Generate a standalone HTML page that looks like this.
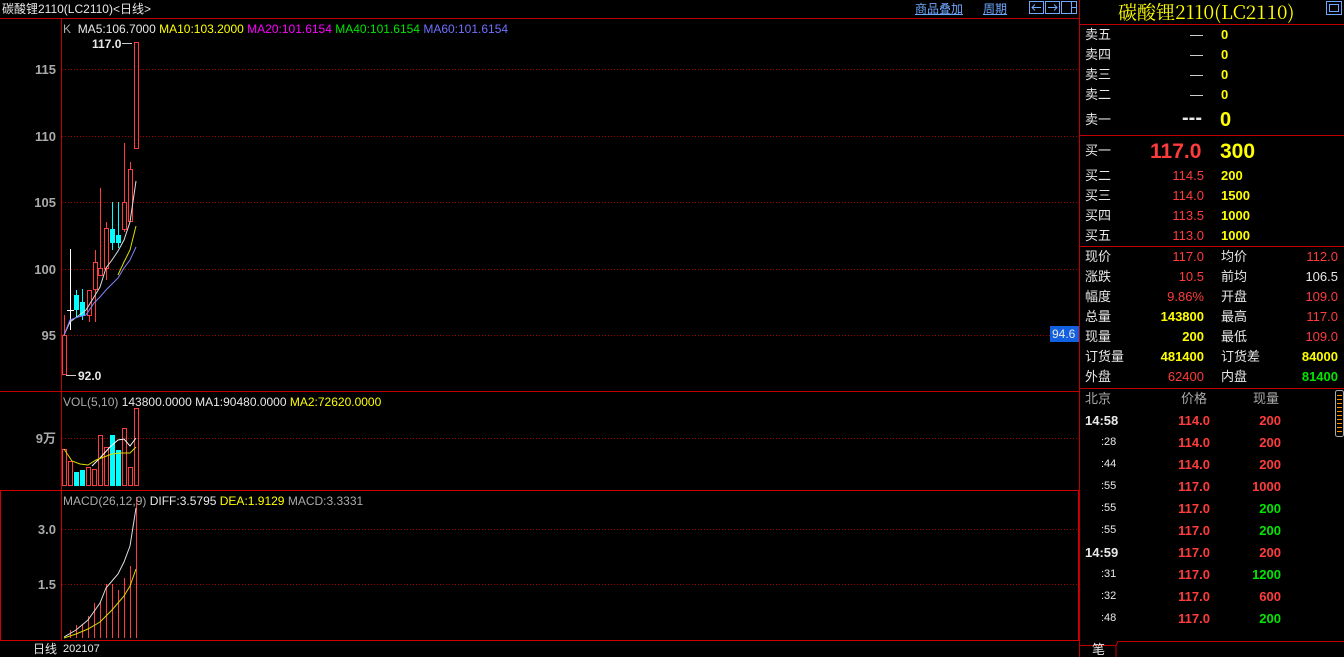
<!DOCTYPE html>
<html><head><meta charset="utf-8"><style>
body{margin:0;width:1344px;height:657px;background:#000;overflow:hidden;position:relative;font-family:"Liberation Sans","Noto Sans CJK SC",sans-serif;font-size:13px;color:#ddd}
.a{position:absolute;white-space:nowrap;line-height:1}
.r{text-align:right}
.w{color:#e8e8e8}.red{color:#ff3c3c}.y{color:#ffff00}.g{color:#00e600}.gr{color:#aaa}
b{font-weight:bold}
</style></head><body>
<svg class="a" style="left:0;top:0" width="1344" height="657">
<g stroke="#c00000" stroke-width="1" fill="none">
<line x1="0" y1="18.5" x2="1079" y2="18.5"/>
<line x1="61.5" y1="18" x2="61.5" y2="641"/>
<line x1="1079.5" y1="0" x2="1079.5" y2="657"/>
<line x1="0" y1="391.5" x2="1079" y2="391.5"/>
<line x1="1080" y1="24.5" x2="1344" y2="24.5"/>
<line x1="1080" y1="135.5" x2="1344" y2="135.5"/>
<line x1="1080" y1="246.5" x2="1344" y2="246.5"/>
<line x1="1080" y1="388.5" x2="1344" y2="388.5"/>
<line x1="0" y1="640.5" x2="1079" y2="640.5"/>
<rect x="0.5" y="490.5" width="1078" height="150" stroke="#d00000"/>
<line x1="61.5" y1="490" x2="61.5" y2="641" stroke="#d00000"/>
</g>
<g stroke="#a00000" stroke-dasharray="1,2">
<line x1="62" y1="69.5" x2="1079" y2="69.5"/><line x1="62" y1="136.5" x2="1079" y2="136.5"/>
<line x1="62" y1="202.5" x2="1079" y2="202.5"/><line x1="62" y1="269.5" x2="1079" y2="269.5"/>
<line x1="62" y1="335.5" x2="1079" y2="335.5"/><line x1="62" y1="438.5" x2="1079" y2="438.5"/>
<line x1="62" y1="529.5" x2="1079" y2="529.5"/><line x1="62" y1="584.5" x2="1079" y2="584.5"/>
</g>
<!-- candles -->
<g stroke="#ff3c3c" fill="none">
<line x1="64.5" y1="315" x2="64.5" y2="375"/><rect x="62.5" y="335.5" width="4" height="39" fill="#000"/>
<line x1="89.5" y1="290" x2="89.5" y2="322"/><rect x="87.5" y="290.5" width="4" height="25" fill="#000"/>
<line x1="95.5" y1="250" x2="95.5" y2="322"/><rect x="93.5" y="262.5" width="4" height="27" fill="#000"/>
<line x1="100.5" y1="188" x2="100.5" y2="275"/><rect x="98.5" y="268.5" width="4" height="7" fill="#000"/>
<line x1="106.5" y1="222" x2="106.5" y2="280"/><rect x="104.5" y="228.5" width="4" height="40" fill="#000"/>
<line x1="124.5" y1="143" x2="124.5" y2="232"/><rect x="122.5" y="202.5" width="4" height="27" fill="#000"/>
<line x1="130.5" y1="162" x2="130.5" y2="222"/><rect x="128.5" y="169.5" width="4" height="52" fill="#000"/>
<line x1="136.5" y1="42" x2="136.5" y2="149"/><rect x="134.5" y="42.5" width="4" height="106" fill="#000"/>
</g>
<g stroke="#fff"><line x1="70.5" y1="249" x2="70.5" y2="330"/><line x1="67" y1="310.5" x2="74" y2="310.5"/></g>
<g stroke="#00ffff" fill="#00ffff">
<line x1="76.5" y1="290" x2="76.5" y2="318"/><rect x="74.5" y="295.5" width="4" height="14"/>
<line x1="82.5" y1="289" x2="82.5" y2="320"/><rect x="80.5" y="302.5" width="4" height="13"/>
<line x1="112.5" y1="202" x2="112.5" y2="250"/><rect x="110.5" y="229.5" width="4" height="13"/>
<line x1="118.5" y1="202" x2="118.5" y2="248"/><rect x="116.5" y="235.5" width="4" height="7"/>
</g>
<polyline fill="none" stroke="#ddd" points="64,335 70,322 78,316 86,310 94,297 100,287 106,268 112,260 118,251 124,240 130,222 136,181"/>
<polyline fill="none" stroke="#dd0" points="118,275 124,262 130,250 136,226"/>
<polyline fill="none" stroke="#8080ff" points="64,335 70,320 78,317 86,315 94,303 100,297 106,290 112,284 118,278 124,268 130,260 136,247"/>
<g stroke="#ccc"><line x1="122" y1="43.5" x2="132" y2="43.5"/><line x1="66" y1="375.5" x2="76" y2="375.5"/></g>
<!-- volume -->
<g stroke="#ff3c3c" fill="none">
<rect x="62.5" y="449.5" width="4" height="36"/><rect x="68.5" y="461.5" width="4" height="24"/>
<rect x="86.5" y="467.5" width="4" height="18"/><rect x="92.5" y="469.5" width="4" height="16"/>
<rect x="98.5" y="435.5" width="4" height="50"/><rect x="104.5" y="447.5" width="4" height="38"/>
<rect x="122.5" y="428.5" width="4" height="57"/><rect x="128.5" y="467.5" width="4" height="18"/>
<rect x="134.5" y="408.5" width="4" height="77"/>
</g>
<g fill="#00ffff"><rect x="74" y="472" width="5" height="14"/><rect x="80" y="470" width="5" height="16"/><rect x="110" y="435" width="5" height="51"/><rect x="116" y="450" width="5" height="36"/></g>
<polyline fill="none" stroke="#fff" points="92,466 100,458 110,447 118,440 124,439 130,446 136,438"/>
<polyline fill="none" stroke="#dd0" points="64,449 72,461 80,464 88,465 96,460 104,457 112,454 120,453 130,453 136,447"/>
<!-- macd -->
<g stroke="#ff3c3c">
<line x1="70.5" y1="630" x2="70.5" y2="638"/><line x1="76.5" y1="625" x2="76.5" y2="638"/><line x1="82.5" y1="624" x2="82.5" y2="638"/>
<line x1="88.5" y1="616" x2="88.5" y2="638"/><line x1="94.5" y1="603" x2="94.5" y2="638"/><line x1="100.5" y1="602" x2="100.5" y2="638"/>
<line x1="106.5" y1="584" x2="106.5" y2="638"/><line x1="112.5" y1="584" x2="112.5" y2="638"/><line x1="118.5" y1="590" x2="118.5" y2="638"/>
<line x1="124.5" y1="578" x2="124.5" y2="638"/><line x1="130.5" y1="566" x2="130.5" y2="638"/><line x1="136.5" y1="497" x2="136.5" y2="638"/>
</g>
<polyline fill="none" stroke="#ddd" points="64,637 76,630 88,620 100,603 106,588 112,581 118,574 124,562 130,546 136,508"/>
<polyline fill="none" stroke="#dd0" points="64,638 76,634 88,629 100,622 112,610 124,596 130,586 136,569"/>
<!-- icons -->
<g stroke="#6fa8ff" fill="none">
<rect x="1029.5" y="1.5" width="14" height="12"/><rect x="1045.5" y="1.5" width="14" height="12"/><rect x="1061.5" y="1.5" width="15" height="12"/>
<path d="M1032 7.5h9M1035 4.5l-3 3 3 3M1048 7.5h9M1054 4.5l3 3-3 3M1071.5 2v11M1071 7.5h5"/>
<rect x="1326.5" y="1.5" width="15" height="13"/><rect x="1329.5" y="4.5" width="9" height="7"/>
</g>
<rect x="1050" y="326" width="29" height="16" fill="#1060e0"/>
<rect x="1335.5" y="390.5" width="8" height="46" rx="2" fill="none" stroke="#aaa"/>
<g stroke="#ff9000"><line x1="1337" y1="395.5" x2="1342" y2="395.5"/><line x1="1337" y1="399.5" x2="1342" y2="399.5"/><line x1="1337" y1="403.5" x2="1342" y2="403.5"/><line x1="1337" y1="407.5" x2="1342" y2="407.5"/><line x1="1337" y1="411.5" x2="1342" y2="411.5"/><line x1="1337" y1="415.5" x2="1342" y2="415.5"/><line x1="1337" y1="419.5" x2="1342" y2="419.5"/><line x1="1337" y1="423.5" x2="1342" y2="423.5"/><line x1="1337" y1="427.5" x2="1342" y2="427.5"/><line x1="1337" y1="431.5" x2="1342" y2="431.5"/></g>
<path d="M1080 645.5h36l2-4h226M1116 645.5v12" stroke="#c00000" fill="none"/>
</svg>

<div class="a w" style="left:2px;top:3px;font-size:12px">碳酸锂2110(LC2110)&lt;日线&gt;</div>
<div class="a" style="left:915px;top:3px;font-size:12px;color:#6fa8ff;text-decoration:underline">商品叠加</div>
<div class="a" style="left:983px;top:3px;font-size:12px;color:#6fa8ff;text-decoration:underline">周期</div>
<div class="a" style="left:63px;top:23px;font-size:12px"><span class="gr">K</span>&nbsp; <span class="w">MA5:106.7000</span> <span class="y">MA10:103.2000</span> <span style="color:#ff00ff">MA20:101.6154</span> <span class="g">MA40:101.6154</span> <span style="color:#7070ff">MA60:101.6154</span></div>
<div class="a w" style="left:92px;top:38px;font-size:12px"><b>117.0</b></div>
<div class="a w" style="left:78px;top:370px;font-size:12px"><b>92.0</b></div>
<div class="a gr r" style="left:20px;width:36px;top:63px"><b>115</b></div>
<div class="a gr r" style="left:20px;width:36px;top:130px"><b>110</b></div>
<div class="a gr r" style="left:20px;width:36px;top:196px"><b>105</b></div>
<div class="a gr r" style="left:20px;width:36px;top:263px"><b>100</b></div>
<div class="a gr r" style="left:20px;width:36px;top:329px"><b>95</b></div>
<div class="a w" style="left:1052px;top:328px;font-size:12px">94.6</div>
<div class="a" style="left:63px;top:396px;font-size:12px"><span class="gr">VOL(5,10)</span> <span class="w">143800.0000</span> <span class="w">MA1:90480.0000</span> <span class="y">MA2:72620.0000</span></div>
<div class="a gr r" style="left:20px;width:36px;top:432px"><b>9万</b></div>
<div class="a" style="left:63px;top:495px;font-size:12px"><span class="gr">MACD(26,12,9)</span> <span class="w">DIFF:3.5795</span> <span class="y">DEA:1.9129</span> <span class="gr">MACD:3.3331</span></div>
<div class="a gr r" style="left:20px;width:36px;top:523px"><b>3.0</b></div>
<div class="a gr r" style="left:20px;width:36px;top:578px"><b>1.5</b></div>
<div class="a w" style="left:33px;top:643px;font-size:12px">日线</div>
<div class="a w" style="left:63px;top:644px;font-size:11px">202107</div>

<div class="a y" style="left:1118px;top:2px;font-size:19px;font-family:'Noto Serif CJK SC','Liberation Serif',serif">碳酸锂2110(LC2110)</div>
<div class="a w" style="left:1085px;top:28px">卖五</div><div class="a w" style="left:1190px;top:28px">—</div><div class="a y" style="left:1221px;top:28px"><b>0</b></div>
<div class="a w" style="left:1085px;top:48px">卖四</div><div class="a w" style="left:1190px;top:48px">—</div><div class="a y" style="left:1221px;top:48px"><b>0</b></div>
<div class="a w" style="left:1085px;top:68px">卖三</div><div class="a w" style="left:1190px;top:68px">—</div><div class="a y" style="left:1221px;top:68px"><b>0</b></div>
<div class="a w" style="left:1085px;top:88px">卖二</div><div class="a w" style="left:1190px;top:88px">—</div><div class="a y" style="left:1221px;top:88px"><b>0</b></div>
<div class="a w" style="left:1085px;top:113px">卖一</div><div class="a w" style="left:1182px;top:108px;font-size:20px"><b>---</b></div><div class="a y" style="left:1220px;top:110px;font-size:20px"><b>0</b></div>
<div class="a w" style="left:1085px;top:144px">买一</div><div class="a red" style="left:1150px;top:141px;font-size:21px"><b>117.0</b></div><div class="a y" style="left:1220px;top:141px;font-size:21px"><b>300</b></div>
<div id="buy"></div>
<div class="a w" style="left:1085px;top:169px">买二</div><div class="a red r" style="left:1150px;width:54px;top:169px">114.5</div><div class="a y" style="left:1221px;top:169px"><b>200</b></div>
<div class="a w" style="left:1085px;top:189px">买三</div><div class="a red r" style="left:1150px;width:54px;top:189px">114.0</div><div class="a y" style="left:1221px;top:189px"><b>1500</b></div>
<div class="a w" style="left:1085px;top:209px">买四</div><div class="a red r" style="left:1150px;width:54px;top:209px">113.5</div><div class="a y" style="left:1221px;top:209px"><b>1000</b></div>
<div class="a w" style="left:1085px;top:229px">买五</div><div class="a red r" style="left:1150px;width:54px;top:229px">113.0</div><div class="a y" style="left:1221px;top:229px"><b>1000</b></div>

<div class="a w" style="left:1085px;top:250px">现价</div><div class="a red r" style="left:1140px;width:64px;top:250px">117.0</div><div class="a w" style="left:1221px;top:250px">均价</div><div class="a red r" style="left:1270px;width:68px;top:250px">112.0</div>
<div class="a w" style="left:1085px;top:270px">涨跌</div><div class="a red r" style="left:1140px;width:64px;top:270px">10.5</div><div class="a w" style="left:1221px;top:270px">前均</div><div class="a w r" style="left:1270px;width:68px;top:270px">106.5</div>
<div class="a w" style="left:1085px;top:290px">幅度</div><div class="a red r" style="left:1140px;width:64px;top:290px">9.86%</div><div class="a w" style="left:1221px;top:290px">开盘</div><div class="a red r" style="left:1270px;width:68px;top:290px">109.0</div>
<div class="a w" style="left:1085px;top:310px">总量</div><div class="a y r" style="left:1140px;width:64px;top:310px"><b>143800</b></div><div class="a w" style="left:1221px;top:310px">最高</div><div class="a red r" style="left:1270px;width:68px;top:310px">117.0</div>
<div class="a w" style="left:1085px;top:330px">现量</div><div class="a y r" style="left:1140px;width:64px;top:330px"><b>200</b></div><div class="a w" style="left:1221px;top:330px">最低</div><div class="a red r" style="left:1270px;width:68px;top:330px">109.0</div>
<div class="a w" style="left:1085px;top:350px">订货量</div><div class="a y r" style="left:1140px;width:64px;top:350px"><b>481400</b></div><div class="a w" style="left:1221px;top:350px">订货差</div><div class="a y r" style="left:1270px;width:68px;top:350px"><b>84000</b></div>
<div class="a w" style="left:1085px;top:370px">外盘</div><div class="a red r" style="left:1140px;width:64px;top:370px">62400</div><div class="a w" style="left:1221px;top:370px">内盘</div><div class="a g r" style="left:1270px;width:68px;top:370px"><b>81400</b></div>

<div class="a gr" style="left:1085px;top:392px">北京</div><div class="a gr" style="left:1181px;top:392px">价格</div><div class="a gr" style="left:1253px;top:392px">现量</div>
<div class="a w" style="left:1085px;top:414px"><b>14:58</b></div><div class="a red r" style="left:1150px;width:60px;top:414px"><b>114.0</b></div><div class="a red r" style="left:1240px;width:41px;top:414px"><b>200</b></div>
<div class="a w" style="left:1101px;top:437px;font-size:11px">:28</div><div class="a red r" style="left:1150px;width:60px;top:436px"><b>114.0</b></div><div class="a red r" style="left:1240px;width:41px;top:436px"><b>200</b></div>
<div class="a w" style="left:1101px;top:459px;font-size:11px">:44</div><div class="a red r" style="left:1150px;width:60px;top:458px"><b>114.0</b></div><div class="a red r" style="left:1240px;width:41px;top:458px"><b>200</b></div>
<div class="a w" style="left:1101px;top:481px;font-size:11px">:55</div><div class="a red r" style="left:1150px;width:60px;top:480px"><b>117.0</b></div><div class="a red r" style="left:1240px;width:41px;top:480px"><b>1000</b></div>
<div class="a w" style="left:1101px;top:503px;font-size:11px">:55</div><div class="a red r" style="left:1150px;width:60px;top:502px"><b>117.0</b></div><div class="a g r" style="left:1240px;width:41px;top:502px"><b>200</b></div>
<div class="a w" style="left:1101px;top:525px;font-size:11px">:55</div><div class="a red r" style="left:1150px;width:60px;top:524px"><b>117.0</b></div><div class="a g r" style="left:1240px;width:41px;top:524px"><b>200</b></div>
<div class="a w" style="left:1085px;top:546px"><b>14:59</b></div><div class="a red r" style="left:1150px;width:60px;top:546px"><b>117.0</b></div><div class="a red r" style="left:1240px;width:41px;top:546px"><b>200</b></div>
<div class="a w" style="left:1101px;top:569px;font-size:11px">:31</div><div class="a red r" style="left:1150px;width:60px;top:568px"><b>117.0</b></div><div class="a g r" style="left:1240px;width:41px;top:568px"><b>1200</b></div>
<div class="a w" style="left:1101px;top:591px;font-size:11px">:32</div><div class="a red r" style="left:1150px;width:60px;top:590px"><b>117.0</b></div><div class="a red r" style="left:1240px;width:41px;top:590px"><b>600</b></div>
<div class="a w" style="left:1101px;top:613px;font-size:11px">:48</div><div class="a red r" style="left:1150px;width:60px;top:612px"><b>117.0</b></div><div class="a g r" style="left:1240px;width:41px;top:612px"><b>200</b></div>
<div class="a w" style="left:1092px;top:643px">笔</div>
</body></html>
